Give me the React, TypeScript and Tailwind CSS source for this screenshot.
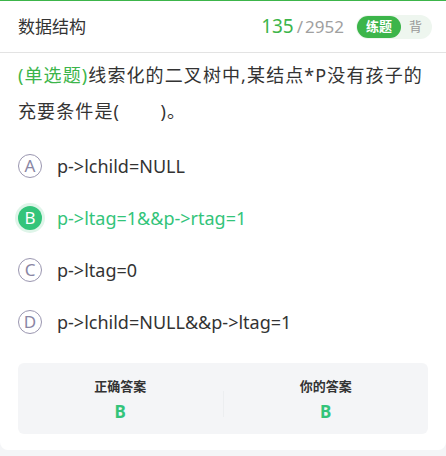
const options = [
  { key: 'A', text: 'p->lchild=NULL' },
  { key: 'B', text: 'p->ltag=1&&p->rtag=1' },
  { key: 'C', text: 'p->ltag=0' },
  { key: 'D', text: 'p->lchild=NULL&&p->ltag=1' },
];

const selected = 'B';

const App = () => {
  return (
    <div
      className="w-[446px] h-[456px] bg-[#f4f5f7] overflow-hidden"
      style={{ fontFamily: '"Noto Sans", "Noto Sans CJK SC", sans-serif' }}
    >
      <div className="bg-white rounded-b-[8px] border-t border-[#3cb54a] h-[450px]">
        <div className="h-[52px] flex items-center justify-between pl-[18px] pr-[14px] border-b border-[#e3e3e3]">
          <span className="text-[17px] text-[#333]">数据结构</span>
          <div className="flex items-center">
            <span className="text-[19px] text-[#3cb54a] leading-none">135</span>
            <span className="text-[17px] text-[#a0a0a0] ml-[3px] leading-none">/</span>
            <span className="text-[17px] text-[#a0a0a0] ml-[2px] leading-none">2952</span>
            <div className="ml-[12px] flex items-center h-[24px] rounded-full bg-[#eef6ef] pr-[10px]">
              <span className="h-[22px] px-[9px] flex items-center rounded-full bg-[#3cb54a] text-white text-[13px] font-bold ml-[1px]">
                练题
              </span>
              <span className="ml-[8px] text-[13px] text-[#999]">背</span>
            </div>
          </div>
        </div>

        <p className="px-[18px] pt-[4px] text-[18px] leading-[36px] tracking-[1.1px] text-[#333]">
          <span className="text-[#3cb54a]">(单选题)</span>线索化的二叉树中,某结点*P没有孩子的充要条件是(&nbsp;&nbsp;&nbsp;&nbsp;&nbsp;&nbsp;&nbsp;)。
        </p>

        <div className="flex flex-col gap-[28px] pt-[25px] pl-[18px]">
          {options.map((o) => {
            const on = o.key === selected;
            return (
              <div key={o.key} className="flex items-center h-[24px]">
                {on ? (
                  <span className="w-[24px] h-[24px] shrink-0 rounded-full bg-[#33c47a] text-white text-[17px] flex items-center justify-center ring-[3px] ring-[#dff5e9]">
                    {o.key}
                  </span>
                ) : (
                  <span className="w-[24px] h-[24px] shrink-0 rounded-full border border-[#9a96b0] text-[#8a86a4] text-[17px] flex items-center justify-center">
                    {o.key}
                  </span>
                )}
                <span className={`ml-[15px] text-[18px] ${on ? 'text-[#33c47a]' : 'text-[#333]'}`}>
                  {o.text}
                </span>
              </div>
            );
          })}
        </div>

        <div className="mx-[18px] mt-[29px] h-[71px] rounded-[6px] bg-[#f4f5f7] flex items-center">
          <div className="flex-1 flex flex-col items-center gap-[6px]">
            <span className="text-[13px] font-bold text-[#333]">正确答案</span>
            <span className="text-[17px] font-bold text-[#33c47a] leading-none">B</span>
          </div>
          <div className="w-px h-[26px] bg-[#eceef0] mt-[10px]" />
          <div className="flex-1 flex flex-col items-center gap-[6px]">
            <span className="text-[13px] font-bold text-[#333]">你的答案</span>
            <span className="text-[17px] font-bold text-[#33c47a] leading-none">B</span>
          </div>
        </div>
      </div>
    </div>
  );
};

export default App;
